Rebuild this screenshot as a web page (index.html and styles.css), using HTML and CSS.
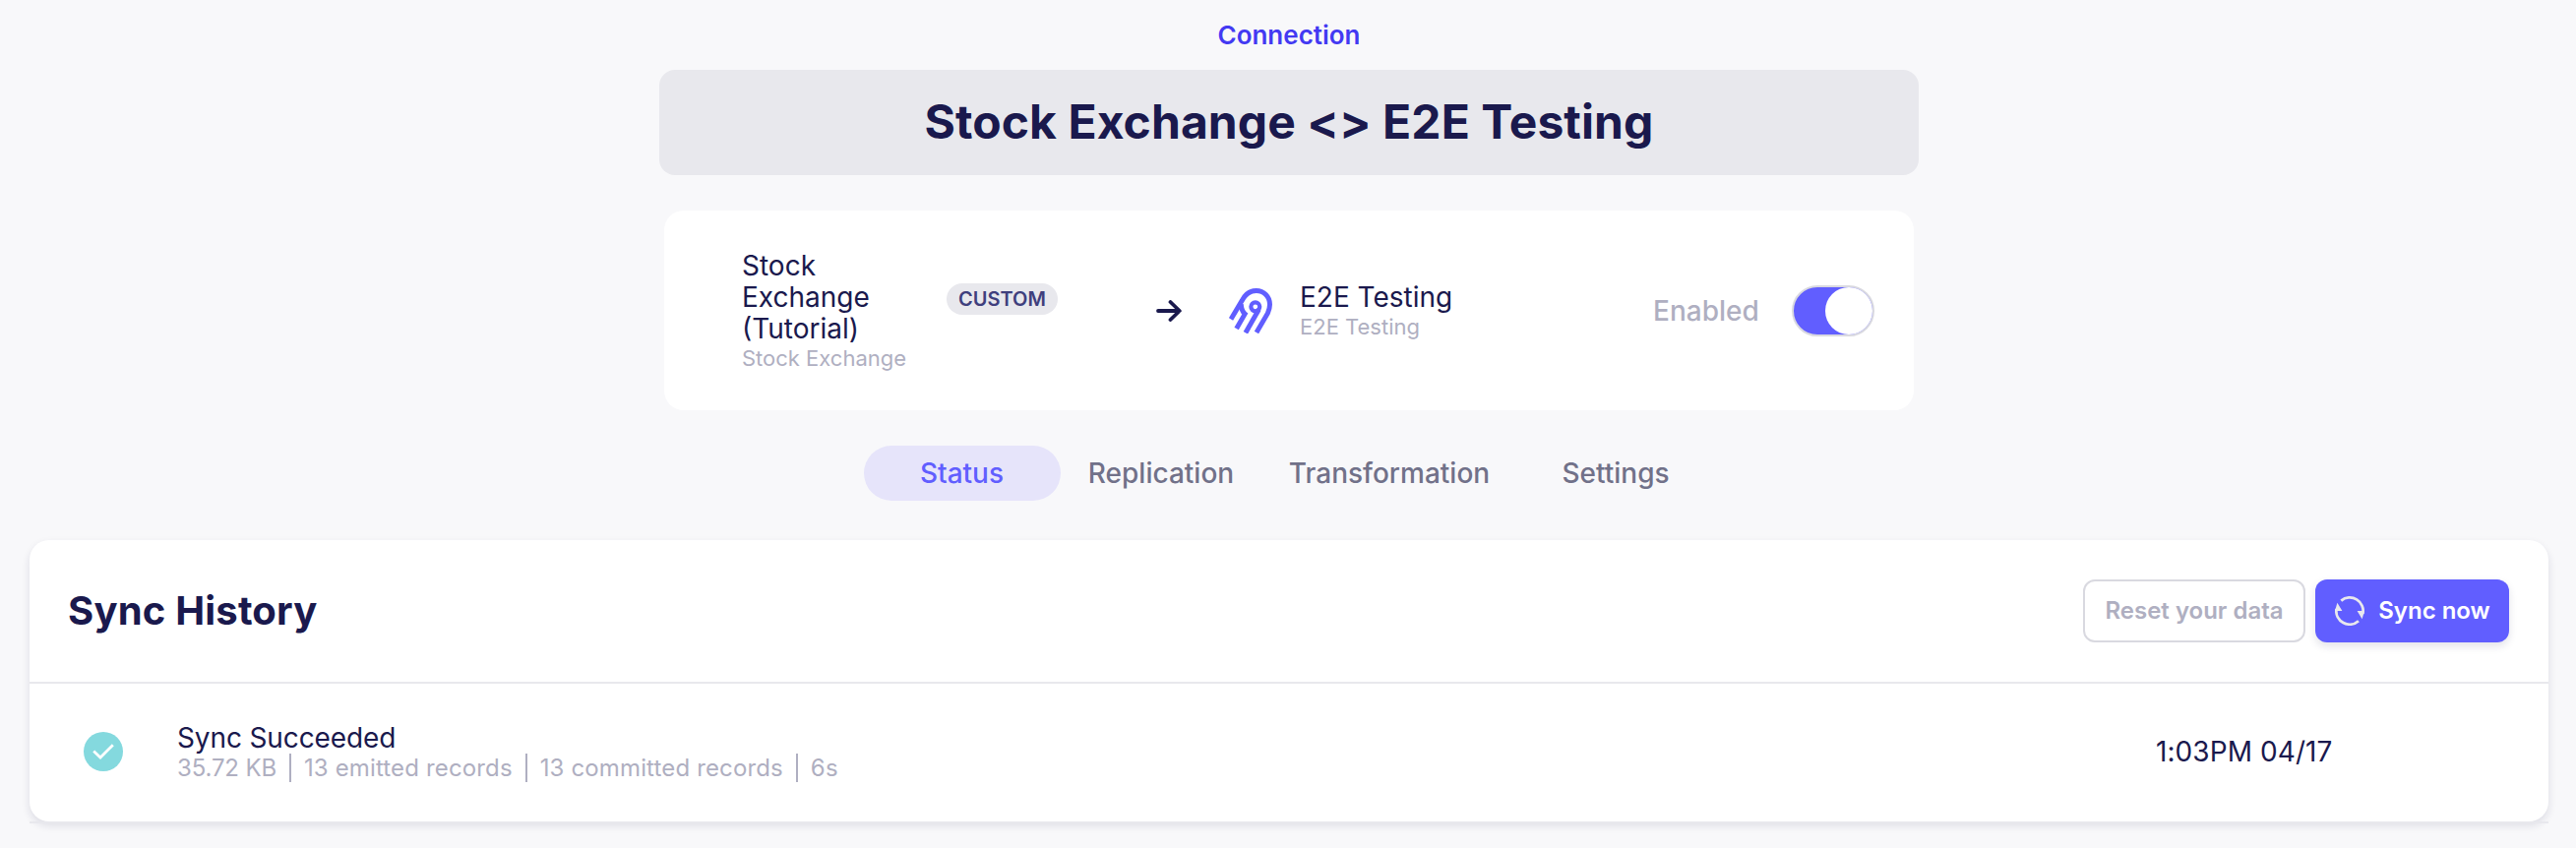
FILE: index.html
```html
<!DOCTYPE html>
<html lang="en">
<head>
<meta charset="utf-8">
<title>Connection</title>
<link rel="stylesheet" href="styles.css">
</head>
<body>
<header class="head">
  <div class="kind">Connection</div>
  <h1 class="name">Stock Exchange &lt;&gt; E2E Testing</h1>
</header>
<section class="link-card">
  <div class="source">
    <div class="label">Stock Exchange (Tutorial)</div>
    <div class="sub">Stock Exchange</div>
  </div>
  <span class="badge">CUSTOM</span>
  <svg class="arrow" viewBox="0 0 26 22" fill="none" stroke="#1a194d" stroke-width="3.8" stroke-linecap="round" stroke-linejoin="round"><path d="M2 11H23.5M14.5 2L23.8 11L14.5 20"/></svg>
  <svg class="logo" viewBox="57 68 133 139" fill="none" stroke="#615eff" stroke-width="15"><path d="M63 163L97 106C106 88 120 75.500 141 75.500C164 75.500 182.500 94 182.500 118C182.500 128 180 136 176 145L141.500 204"/><path d="M94 117C95 131 98 140 106 147L80 192"/><circle cx="138" cy="125" r="13.500" stroke-width="12.500"/><path d="M149 133L108 205"/></svg>
  <div class="dest">
    <div class="label">E2E Testing</div>
    <div class="sub">E2E Testing</div>
  </div>
  <span class="enabled">Enabled</span>
  <div class="toggle"><div class="knob"></div></div>
</section>
<nav class="tabs">
  <div class="tab active">Status</div>
  <div class="tab">Replication</div>
  <div class="tab wide">Transformation</div>
  <div class="tab">Settings</div>
</nav>
<section class="history">
  <div class="history-head">
    <h2>Sync History</h2>
    <div class="actions">
      <button class="btn reset">Reset your data</button>
      <button class="btn sync">
        <svg viewBox="0 0 30 30" fill="none" stroke="#e8e8ed" stroke-width="2.8"><path d="M6.3 4.600A13.600 13.600 0 0 1 28.300 18M24 25.200A13.600 13.600 0 0 1 1.500 13"/><path d="M22.600 15H30L27.600 23.200ZM7.400 15H0L2.400 6.800Z" fill="#e8e8ed" stroke="none"/></svg>
        <span>Sync now</span>
      </button>
    </div>
  </div>
  <div class="row">
    <svg class="ok" viewBox="0 0 40 40"><circle cx="20" cy="20" r="20" fill="#84d9de"/><path d="M10.200 19.600L17 26L29.800 13.200" fill="none" stroke="#fff" stroke-width="2.800"/></svg>
    <div class="job">
      <div class="label">Sync Succeeded</div>
      <div class="stats"><span>35.72 KB</span><span>13 emitted records</span><span>13 committed records</span><span>6s</span></div>
    </div>
    <div class="time">1:03PM 04/17</div>
  </div>
</section>
</body>
</html>
```
FILE: styles.css
```css
* { box-sizing: border-box; }
body {
  margin: 0;
  height: 862px;
  overflow: hidden;
  background: #f8f8fa;
  color: #1a194d;
  font-family: Inter, "Liberation Sans", sans-serif;
}
.head { display: flex; flex-direction: column; align-items: center; padding-top: 20px; }
.kind { padding-left: 2px; font-size: 26px; line-height: 32px; font-weight: 600; color: #4339f2; }
.name {
  width: 1280px;
  height: 107px;
  margin: 19px 0 0 2px;
  border-radius: 16px;
  background: #e8e8ed;
  font-size: 48px;
  line-height: 106px;
  font-weight: 700;
  letter-spacing: 0.08px;
  text-align: center;
}
.link-card {
  display: flex;
  align-items: center;
  width: 1270px;
  height: 203px;
  margin: 36px 0 0 675px;
  padding: 0 40px 0 79px;
  border-radius: 20px;
  background: #fff;
}
.label { font-size: 28px; line-height: 32px; }
.sub { font-size: 22px; line-height: 28px; color: #afafc1; }
.source { width: 208px; }
.source .label { width: 150px; }
.badge {
  width: 113px;
  height: 32px;
  margin-bottom: 24px;
  border-radius: 16px;
  background: #e8e8ed;
  color: #3f3f7d;
  font-size: 20px;
  line-height: 32px;
  font-weight: 600;
  text-align: center;
}
.arrow { width: 26px; height: 22px; margin-left: 100px; }
.logo { width: 44px; height: 46px; margin-left: 48px; }
.dest { width: 359px; margin-left: 28px; }
.enabled { width: 109px; font-size: 28px; line-height: 34px; font-weight: 500; color: #afafc1; }
.toggle {
  display: flex;
  justify-content: flex-end;
  width: 84px;
  height: 52px;
  margin-left: auto;
  border: 2px solid #d9d9e0;
  border-radius: 26px;
  background: #615eff;
}
.knob { width: 48px; height: 48px; border-radius: 50%; background: #fff; }
.tabs { display: flex; gap: 2px; margin: 36px 0 0 878px; }
.tab {
  width: 200px;
  height: 56px;
  border-radius: 28px;
  font-size: 28px;
  line-height: 56px;
  font-weight: 500;
  text-align: center;
  color: #717189;
}
.tab.wide { width: 258px; padding-left: 2px; }
.tab.active { padding-right: 1px; background: #e6e4fa; color: #615eff; }
.history {
  height: 286px;
  margin: 40px 28px 0 30px;
  border-radius: 20px;
  background: #fff;
  box-shadow: 0 4px 8px rgba(26, 25, 77, 0.12);
}
.history-head {
  display: flex;
  align-items: center;
  justify-content: space-between;
  height: 146px;
  padding: 0 40px 0 39px;
  border-bottom: 2px solid #e8e8ed;
}
h2 { margin: 0; font-size: 40px; line-height: 48px; font-weight: 700; letter-spacing: 0.2px; }
.actions { display: flex; gap: 10px; }
.btn {
  display: flex;
  align-items: center;
  justify-content: center;
  height: 64px;
  padding: 0;
  border: 0;
  border-radius: 12px;
  font: 600 24px/30px Inter, sans-serif;
}
.reset { width: 226px; border: 2px solid #d9d9e0; background: #fff; color: #afafc1; }
.sync {
  width: 197px;
  gap: 14px;
  padding-left: 1px;
  background: #615eff;
  color: #fff;
  box-shadow: 0 4px 8px rgba(26, 25, 77, 0.12);
}
.sync svg { width: 30px; height: 30px; }
.row {
  display: flex;
  align-items: center;
  height: 142px;
  padding: 0 0 2px 55px;
  border-bottom: 2px solid #e8e8ed;
}
.ok { width: 40px; height: 40px; }
.job { width: 2011px; margin-left: 55px; }
.job .label { letter-spacing: -0.12px; }
.stats { display: flex; font-size: 24px; line-height: 29px; letter-spacing: 0.14px; color: #afafc1; }
.stats span:first-child { letter-spacing: -0.15px; }
.stats span + span { margin-left: 13px; padding-left: 13px; border-left: 2px solid #afafc1; }
.time { font-size: 28px; line-height: 34px; letter-spacing: 0.08px; }
```
